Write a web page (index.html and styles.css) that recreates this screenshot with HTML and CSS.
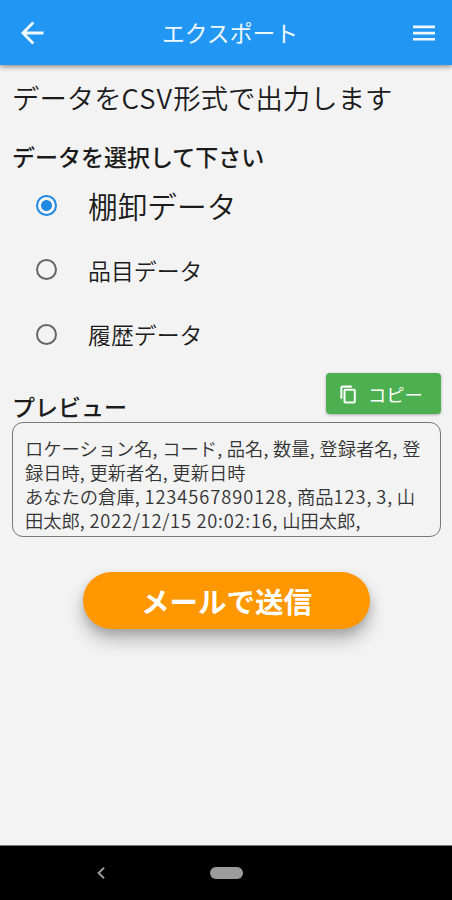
FILE: index.html
```html
<!DOCTYPE html>
<html lang="ja">
<head>
<meta charset="utf-8">
<title>エクスポート</title>
<link rel="stylesheet" href="styles.css">
</head>
<body>
<header class="appbar">
  <svg class="back" viewBox="0 0 24 24" fill="none" stroke="currentColor" stroke-width="2.9"><path d="M23 12H2.500M12.800 1.500L2.500 12l10.300 10.500"/></svg>
  <h1 class="title">エクスポート</h1>
  <svg class="menu" viewBox="0 0 22 16" fill="currentColor"><path d="M0 .5h22v2.700H0zM0 6.700h22v2.700H0zM0 12.900h22v2.700H0z"/></svg>
</header>
<main class="content">
  <p class="lead">データを<span class="lead-latin">CSV</span>形式で出力します</p>
  <h2 class="section">データを選択して下さい</h2>
  <div class="options">
    <div class="option selected"><span class="radio"></span><span class="label">棚卸データ</span></div>
    <div class="option"><span class="radio"></span><span class="label">品目データ</span></div>
    <div class="option"><span class="radio"></span><span class="label">履歴データ</span></div>
  </div>
  <div class="preview-head">
    <h2 class="section">プレビュー</h2>
    <button class="copy">
      <svg class="copy-icon" viewBox="0 0 24 24" fill="currentColor" stroke="currentColor" stroke-width=".5"><path d="M16 1H4c-1.100 0-2 .9-2 2v14h2V3h12V1zm3 4H8c-1.100 0-2 .9-2 2v14c0 1.100.9 2 2 2h11c1.100 0 2-.9 2-2V7c0-1.100-.9-2-2-2zm0 16H8V7h11v14z"/></svg>
      <span>コピー</span>
    </button>
  </div>
  <div class="preview">
    <div>ロケーション名, コード, 品名, 数量, 登録者名, 登</div>
    <div>録日時, 更新者名, 更新日時</div>
    <div>あなたの倉庫, <span class="num">1234567890128</span>, 商品<span class="num">123</span>, <span class="num">3</span>, 山</div>
    <div>田太郎, <span class="date">2022/12/15 20:02:16</span>, 山田太郎,</div>
  </div>
  <button class="send">メールで送信</button>
</main>
<nav class="navbar">
  <svg class="nav-back" viewBox="0 0 8 12" fill="none" stroke="currentColor" stroke-width="2"><path d="M7 .8L1.600 6 7 11.200"/></svg>
  <span class="home"></span>
</nav>
</body>
</html>
```
FILE: styles.css
```css
* { box-sizing: border-box; }
body {
  margin: 0;
  height: 900px;
  display: flex;
  flex-direction: column;
  overflow: hidden;
  background: #f3f3f3;
  color: #1b1b1b;
  font-family: "Noto Sans CJK JP", sans-serif;
}
h1, h2, p { margin: 0; }
button { border: 0; padding: 0; color: #fff; font-family: inherit; }

.appbar {
  height: 65px;
  flex: none;
  display: flex;
  align-items: center;
  justify-content: space-between;
  padding: 0 17px 0 20px;
  background: #2196f3;
  color: #eef8ff;
  box-shadow: 0 2px 5px rgba(0, 0, 0, .4);
}
.back { width: 25px; height: 24px; }
.title { font-size: 22.800px; line-height: 34px; font-weight: 400; padding-left: 2px; }
.menu { width: 22px; height: 16px; }

.content { flex: 1; padding: 12px 11px 0 12px; white-space: nowrap; }
.lead { font-size: 27.400px; line-height: 40px; font-weight: 350; }
.lead-latin { letter-spacing: 1.100px; }
.section { font-size: 23px; line-height: 34px; font-weight: 500; }
.lead + .section { margin-top: 22px; }

.options { display: flex; flex-direction: column; }
.option { height: 64.500px; display: flex; align-items: center; padding-left: 24px; }
.radio {
  width: 21px;
  height: 21px;
  flex: none;
  border: 2px solid #666;
  border-radius: 50%;
  margin-right: 31px;
}
.selected .radio {
  border-color: #1e88e5;
  background: radial-gradient(circle, #1e88e5 5px, transparent 5.800px);
}
.label { font-size: 22.900px; line-height: 34px; font-weight: 350; }
.selected .label { font-size: 29.700px; line-height: 44px; padding-top: 1px; }

.preview-head { display: flex; justify-content: space-between; height: 55px; }
.preview-head .section { margin-top: 22px; }
.copy {
  width: 115px;
  height: 41px;
  margin-top: 6px;
  display: flex;
  align-items: center;
  padding: 2px 0 0 13px;
  gap: 10px;
  border-radius: 4px;
  background: #4caf50;
  box-shadow: 0 1px 3px rgba(0, 0, 0, .3);
  font-size: 18.300px;
  font-weight: 400;
}
.copy-icon { width: 19px; height: 19px; margin-top: 0; }

.preview {
  height: 115px;
  border: 1px solid #777;
  border-radius: 11px;
  padding: 13px 12px 0;
  font-size: 18.300px;
  line-height: 24.300px;
  font-weight: 350;
  word-spacing: .7px;
  color: #333;
}
.num { letter-spacing: .95px; }
.date { letter-spacing: .75px; word-spacing: 0; }

.send {
  display: block;
  width: 287px;
  height: 57px;
  margin: 35px auto 0;
  padding-top: 1px;
  border-radius: 29px;
  background: #ff9800;
  box-shadow: 0 11px 18px rgba(0, 0, 0, .25), 0 4px 8px rgba(0, 0, 0, .12);
  font-size: 28.500px;
  font-weight: 700;
}

.navbar {
  height: 55px;
  flex: none;
  display: flex;
  align-items: center;
  background: #000;
  border-top: 1px solid #777;
  color: #999;
}
.nav-back { width: 8px; height: 12px; margin-left: 97px; }
.home { width: 33px; height: 12px; margin-left: 105px; border-radius: 6px; background: #9c9c9c; }
```
